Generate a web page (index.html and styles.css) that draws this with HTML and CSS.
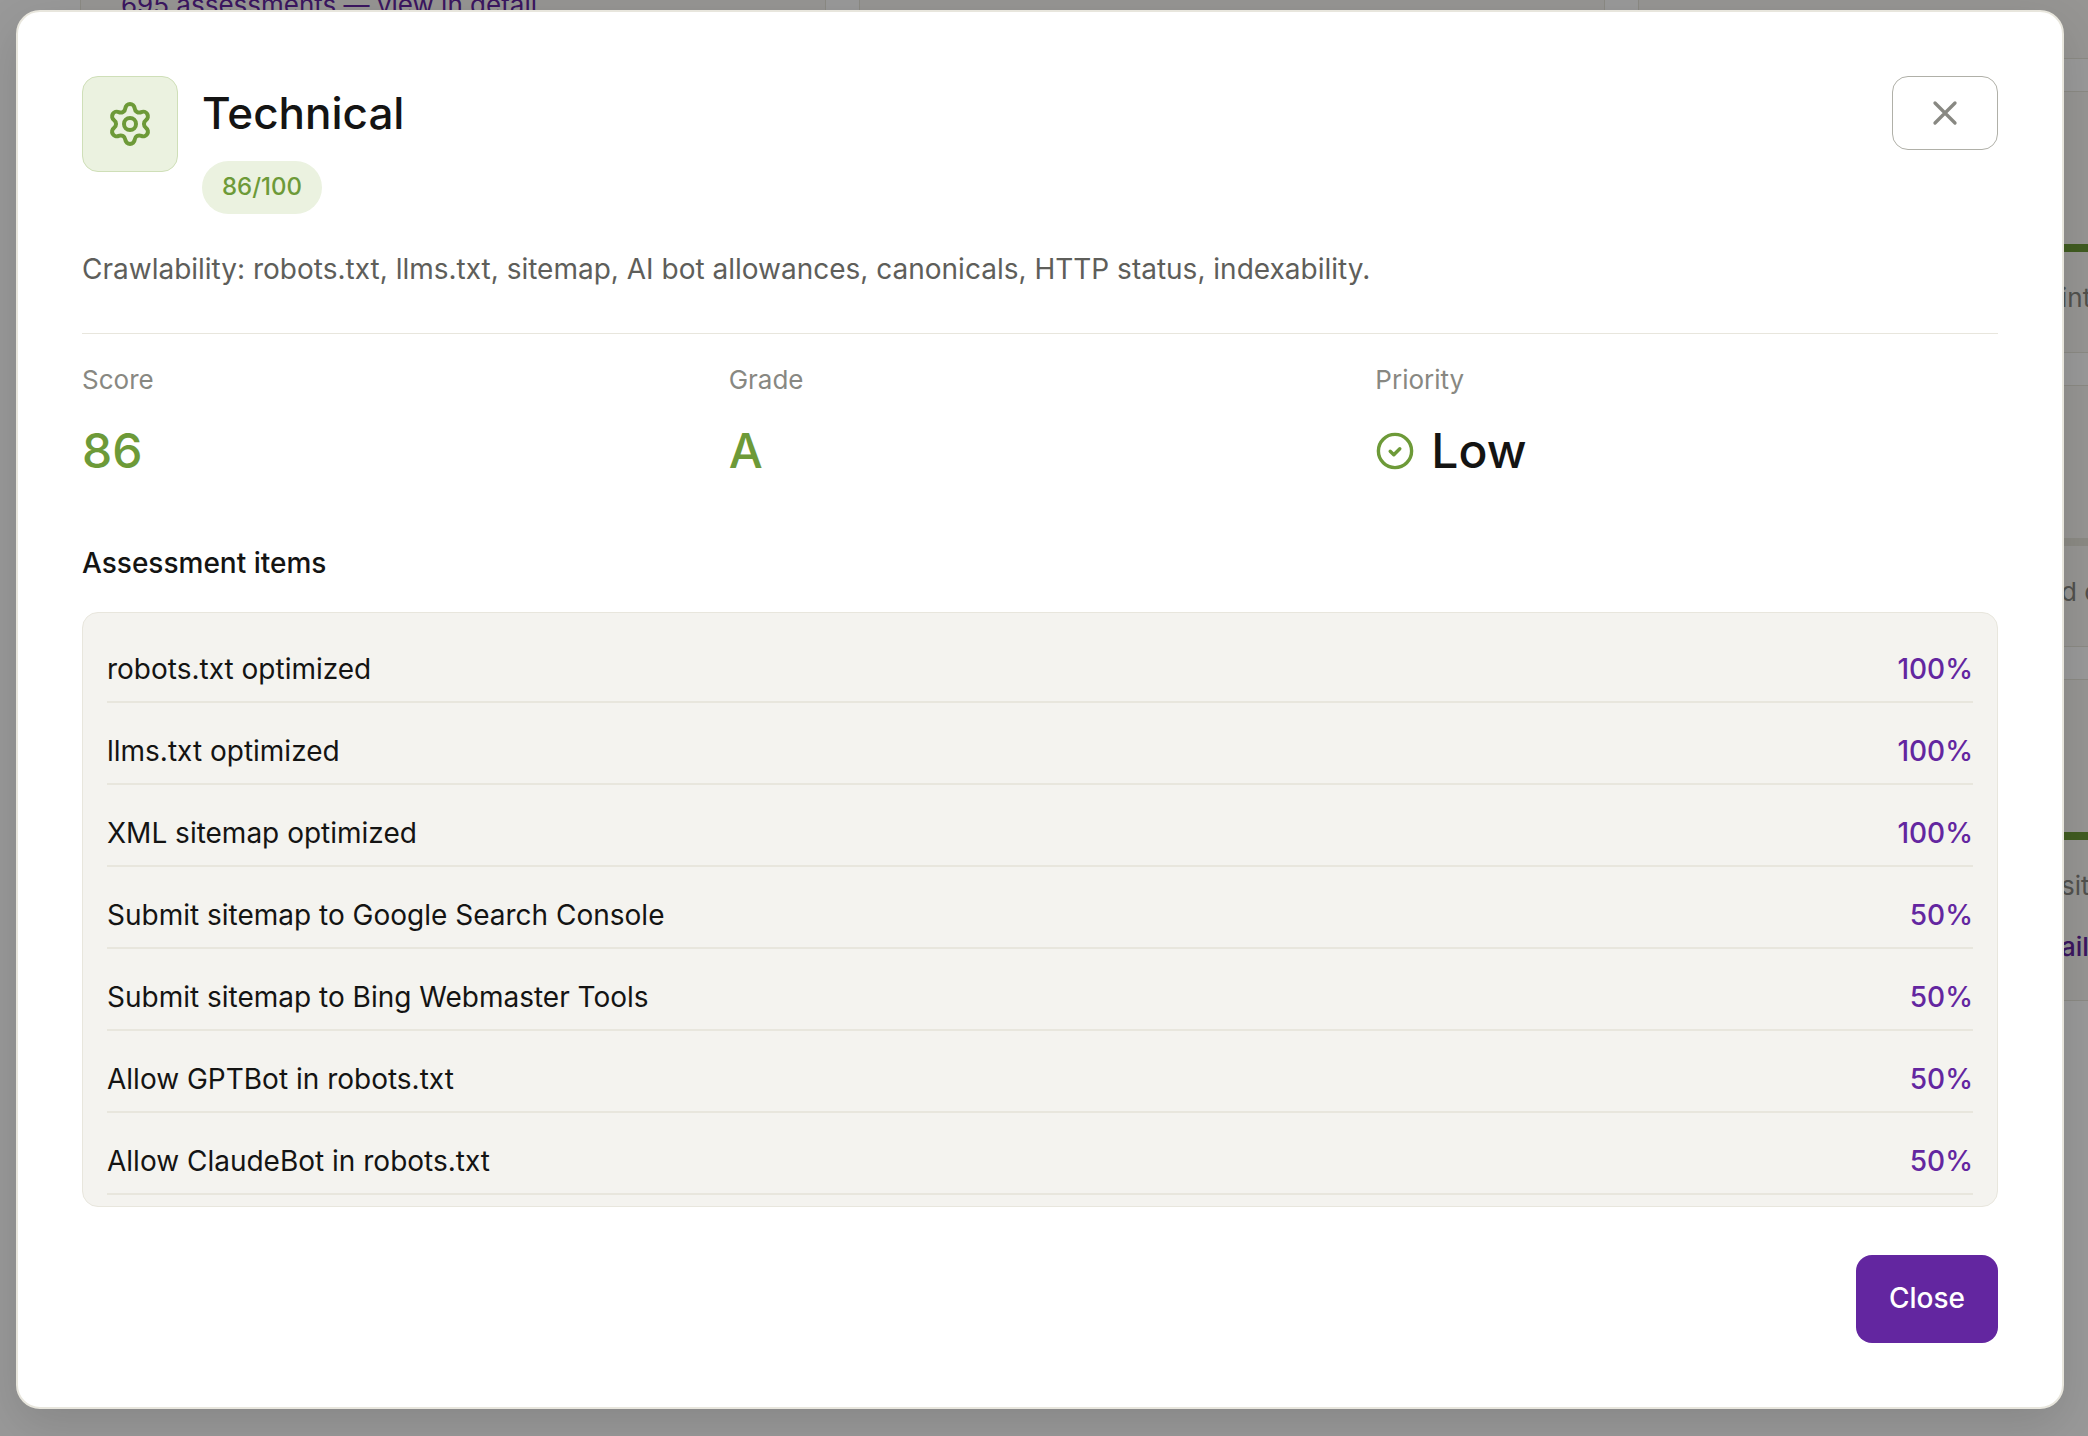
FILE: index.html
```html
<!DOCTYPE html>
<html lang="en">
<head>
<meta charset="utf-8">
<meta name="viewport" content="width=device-width, initial-scale=1">
<title>Technical</title>
<link rel="stylesheet" href="styles.css">
</head>
<body>

<!-- category cards behind the dialog -->
<div class="page" aria-hidden="true">
	<div class="column">
		<div class="card card-link"><a href="#" tabindex="-1">695 assessments — view in detail</a></div>
	</div>
	<div class="column">
		<div class="card card-link"></div>
	</div>
	<div class="column">
		<div class="card card-link"></div>
		<div class="card">
			<div class="bar good"></div>
			<p>int</p>
		</div>
		<div class="card">
			<div class="bar"></div>
			<p>d o</p>
		</div>
		<div class="card tall">
			<div class="bar good"></div>
			<p>sit</p>
			<a href="#" tabindex="-1">ail</a>
		</div>
	</div>
</div>

<div class="overlay">
	<div class="modal" role="dialog" aria-modal="true" aria-labelledby="modal-title">
		<header class="modal-header">
			<span class="icon-box">
				<svg width="48" height="48" viewBox="0 0 24 24" fill="none" stroke="currentColor" stroke-width="2" stroke-linecap="round" stroke-linejoin="round">
					<path d="M9.671 4.136a2.34 2.34 0 0 1 4.659 0 2.34 2.34 0 0 0 3.319 1.915 2.34 2.34 0 0 1 2.33 4.033 2.34 2.34 0 0 0 0 3.831 2.34 2.34 0 0 1-2.33 4.033 2.34 2.34 0 0 0-3.319 1.915 2.34 2.34 0 0 1-4.659 0 2.34 2.34 0 0 0-3.32-1.915 2.34 2.34 0 0 1-2.33-4.033 2.34 2.34 0 0 0 0-3.831A2.34 2.34 0 0 1 6.35 6.051a2.34 2.34 0 0 0 3.319-1.915"/>
					<circle cx="12" cy="12" r="3"/>
				</svg>
			</span>
			<div class="heading">
				<h2 id="modal-title">Technical</h2>
				<span class="badge">86/100</span>
			</div>
			<button type="button" class="btn-x" aria-label="Close dialog">
				<svg width="40" height="40" viewBox="0 0 24 24" fill="none" stroke="currentColor" stroke-width="2" stroke-linecap="round">
					<path d="M18 6 6 18M6 6l12 12"/>
				</svg>
			</button>
		</header>

		<p class="description">Crawlability: robots.txt, llms.txt, sitemap, AI bot allowances, canonicals, HTTP status, indexability.</p>

		<dl class="stats">
			<div>
				<dt>Score</dt>
				<dd class="green">86</dd>
			</div>
			<div>
				<dt>Grade</dt>
				<dd class="green">A</dd>
			</div>
			<div>
				<dt>Priority</dt>
				<dd>
					<svg class="green" width="40" height="40" viewBox="0 0 40 40" fill="none" stroke="currentColor" stroke-width="3.4" stroke-linecap="round" stroke-linejoin="round">
						<circle cx="20" cy="20" r="16.6"/>
						<path d="M15.2 20.2l3.6 3.6 6-6"/>
					</svg>
					Low
				</dd>
			</div>
		</dl>

		<h3>Assessment items</h3>
		<ul class="items">
			<li><span>robots.txt optimized</span><b>100%</b></li>
			<li><span>llms.txt optimized</span><b>100%</b></li>
			<li><span>XML sitemap optimized</span><b>100%</b></li>
			<li><span>Submit sitemap to Google Search Console</span><b>50%</b></li>
			<li><span>Submit sitemap to Bing Webmaster Tools</span><b>50%</b></li>
			<li><span>Allow GPTBot in robots.txt</span><b>50%</b></li>
			<li><span>Allow ClaudeBot in robots.txt</span><b>50%</b></li>
		</ul>

		<footer class="modal-footer">
			<button type="button" class="btn-close">Close</button>
		</footer>
	</div>
</div>

</body>
</html>
```
FILE: styles.css
```css
:root {
	--ink: #141413;
	--muted: #5e5e5a;
	--faint: #888882;
	--line: #e8e6dd;
	--soft: #f4f3ef;
	--green: #6d9a38;
	--green-soft: #ebf2e0;
	--purple: #6326a0;
}

* { box-sizing: border-box; }

body {
	margin: 0;
	background: #fff;
	color: var(--ink);
	font-family: Inter, "Liberation Sans", sans-serif;
	font-size: 28px;
	line-height: 42px;
}

h2, h3, p, dl, dd, ul { margin: 0; padding: 0; }
button { font: inherit; cursor: pointer; }

/* page behind */
.page {
	position: absolute;
	inset: 0;
	overflow: hidden;
	display: grid;
	grid-template-columns: repeat(3, 746px);
	column-gap: 33px;
	padding-left: 80px;
	font-size: 26px;
}
.column { display: flex; flex-direction: column; gap: 32px; }
.card {
	height: 262px;
	padding-top: 152px;
	background: #faf9f5;
	border: 1px solid var(--line);
	color: #888882;
}
.card p, .card a { display: block; padding-left: 422px; }
.card a { color: var(--purple); font-weight: 500; text-decoration: none; }
.card p { margin-top: 25px; }
.card p + a { margin-top: 19px; }
.card.tall { height: 322px; }
.card.card-link { height: 59px; padding-top: 0; border-top: 0; }
.card.card-link a { padding-left: 40px; margin-top: -16px; font-weight: 400; }
.bar { height: 8px; background: var(--line); }
.bar.good { background: var(--green); }

/* dialog */
.overlay {
	position: relative;
	min-height: 100vh;
	padding: 10px 24px 27px 16px;
	background: rgba(0, 0, 0, .4);
}
.modal {
	padding: 64px;
	background: #fff;
	border: 2px solid var(--line);
	border-radius: 24px;
	box-shadow: 0 16px 48px rgba(0, 0, 0, .12);
}

.modal-header { display: flex; align-items: flex-start; gap: 24px; }
.icon-box {
	display: flex;
	align-items: center;
	justify-content: center;
	width: 96px;
	height: 96px;
	border: 1px solid #cfdfb8;
	border-radius: 16px;
	background: var(--green-soft);
	color: var(--green);
}
.heading { flex: 1; }
.heading h2 { font-size: 44px; line-height: 74px; font-weight: 500; }
.badge {
	display: block;
	width: max-content;
	margin-top: 11px;
	padding: 8px 20px 9px;
	border-radius: 27px;
	background: var(--green-soft);
	color: var(--green);
	font-size: 24px;
	line-height: 36px;
	font-weight: 500;
}
.btn-x {
	display: flex;
	align-items: center;
	justify-content: center;
	width: 106px;
	height: 74px;
	padding: 0;
	border: 1px solid #b0b0a8;
	border-radius: 16px;
	background: #fff;
	color: var(--faint);
}

.description {
	margin-top: 34px;
	padding-bottom: 43px;
	border-bottom: 1px solid var(--line);
	color: var(--muted);
}

.stats {
	display: grid;
	grid-template-columns: repeat(3, 1fr);
	gap: 24px;
	margin-top: 26px;
}
.stats dt { color: var(--faint); font-size: 26px; line-height: 40px; }
.stats dd {
	display: flex;
	align-items: center;
	gap: 16px;
	margin-top: 16px;
	font-size: 48px;
	line-height: 70px;
	font-weight: 500;
}
.stats .green { color: var(--green); }

h3 { margin-top: 56px; font-size: 28px; font-weight: 500; }

.items {
	display: flex;
	flex-direction: column;
	gap: 16px;
	margin-top: 28px;
	padding: 24px 24px 11px;
	list-style: none;
	background: var(--soft);
	border: 1px solid var(--line);
	border-radius: 16px;
}
.items li {
	display: flex;
	justify-content: space-between;
	padding: 11px 0;
	border-bottom: 2px solid var(--line);
}
.items b { color: var(--purple); font-weight: 500; }

.modal-footer { display: flex; justify-content: flex-end; margin-top: 48px; }
.btn-close {
	padding: 22px 33px 24px;
	border: 0;
	border-radius: 16px;
	background: var(--purple);
	color: #fff;
	font-weight: 500;
}
```
